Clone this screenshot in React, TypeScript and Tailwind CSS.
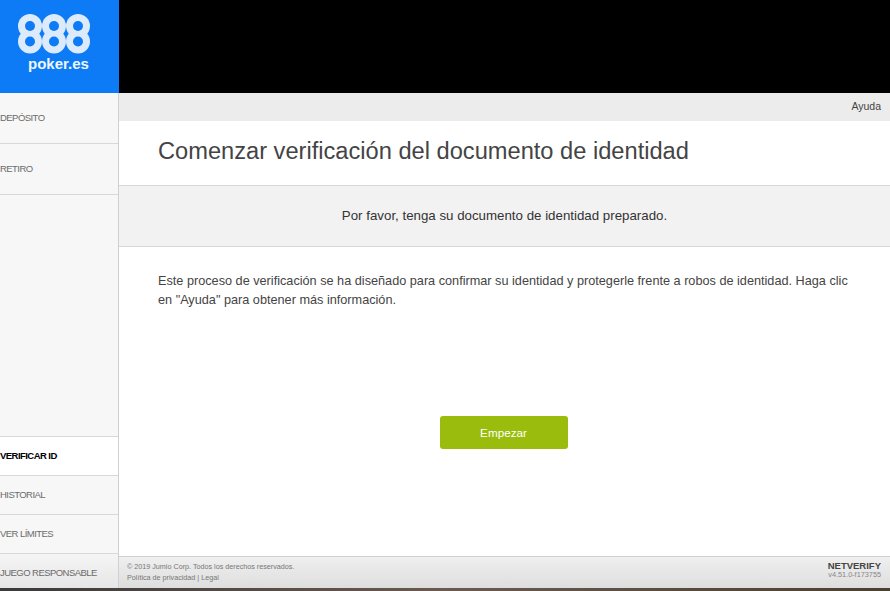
const Logo = () => {
  return (
    <svg width="119" height="56" viewBox="0 0 119 56" className="block">
      {[30, 54, 78].map((x) => (
        <g key={x}>
          <circle cx={x} cy="26" r="12" fill="#dcebfb" />
          <circle cx={x} cy="41.5" r="12" fill="#dcebfb" />
        </g>
      ))}
      {[30, 54, 78].map((x) => (
        <g key={x}>
          <circle cx={x} cy="26" r="5" fill="#0d7bf5" />
          <circle cx={x} cy="41.5" r="5" fill="#0d7bf5" />
        </g>
      ))}
    </svg>
  );
};

const SideItem = ({
  label,
  className,
  active,
}: {
  label: string;
  className: string;
  active?: boolean;
}) => {
  return (
    <div
      className={`flex items-center border-b border-[#d8d8d8] text-[9.5px] tracking-[-0.55px] ${className} ${
        active ? "bg-white font-bold text-black" : "text-[#6b6b6b]"
      }`}
    >
      {label}
    </div>
  );
};

const App = () => {
  return (
    <div className="flex h-[591px] w-[890px] flex-col overflow-hidden bg-white font-['Liberation_Sans',Arial,sans-serif] text-[#444]">
      <header className="flex h-[93px] shrink-0 bg-black">
        <div className="w-[119px] bg-[#0d7bf5]">
          <Logo />
          <div className="pl-[28px] text-[15px] leading-[16px] font-bold text-[#eef6fe]">poker.es</div>
        </div>
      </header>

      <div className="flex min-h-0 flex-1">
        <aside className="flex w-[119px] shrink-0 flex-col border-r border-[#d0d0d0] bg-[#f7f7f7]">
          <SideItem label="DEPÓSITO" className="h-[51px]" />
          <SideItem label="RETIRO" className="h-[51px]" />
          <div className="flex-1 border-b border-[#d8d8d8]" />
          <SideItem label="VERIFICAR ID" className="h-[39px]" active />
          <SideItem label="HISTORIAL" className="h-[39px]" />
          <SideItem label="VER LÍMITES" className="h-[39px]" />
          <div className="flex h-[34px] items-center bg-gradient-to-b from-[#f5f5f5] to-[#e6e6e6] pt-[4px] text-[9.5px] tracking-[-0.55px] text-[#6b6b6b]">
            JUEGO RESPONSABLE
          </div>
        </aside>

        <main className="flex min-w-0 flex-1 flex-col">
          <div className="flex h-[28px] shrink-0 items-center justify-end bg-[#ececec] pr-[9px] text-[10.5px] text-[#444]">
            Ayuda
          </div>
          <div className="flex h-[65px] shrink-0 items-center border-b border-[#d8d8d8] pb-[2px] pl-[39px]">
            <h1 className="text-[23.65px] leading-none text-[#444]">Comenzar verificación del documento de identidad</h1>
          </div>
          <div className="flex h-[61px] shrink-0 items-center justify-center border-b border-[#d8d8d8] bg-[#f2f2f2] text-[13.3px] text-[#333]">
            Por favor, tenga su documento de identidad preparado.
          </div>
          <div className="flex-1 px-[39px] pt-[25px]">
            <p className="w-[700px] text-[12.7px] leading-[19px] text-[#444]">
              Este proceso de verificación se ha diseñado para confirmar su identidad y protegerle frente a robos de
              identidad. Haga clic en "Ayuda" para obtener más información.
            </p>
            <div className="mt-[106px] flex justify-center pr-[2px]">
              <button className="h-[33px] w-[128px] rounded-[3px] bg-[#9abc0c] text-[11.7px] text-white">Empezar</button>
            </div>
          </div>
          <footer className="flex h-[32px] shrink-0 items-start justify-between border-t border-[#cfcfcf] bg-gradient-to-b from-[#efefef] to-[#dedede] pr-[9px] pl-[8px] pt-[4px]">
            <div className="text-[7.2px] leading-[11px] text-[#777]">
              <div>© 2019 Jumio Corp. Todos los derechos reservados.</div>
              <div>Política de privacidad | Legal</div>
            </div>
            <div className="text-right leading-none">
              <div className="text-[9.5px] font-bold text-[#444]">NETVERIFY</div>
              <div className="text-[7.3px] text-[#888]">v4.51.0-f173755</div>
            </div>
          </footer>
        </main>
      </div>
      <div className="h-[3px] shrink-0 bg-gradient-to-r from-[#3a3a3a] via-[#6b5a50] to-[#4a4030]" />
    </div>
  );
};

export default App;
